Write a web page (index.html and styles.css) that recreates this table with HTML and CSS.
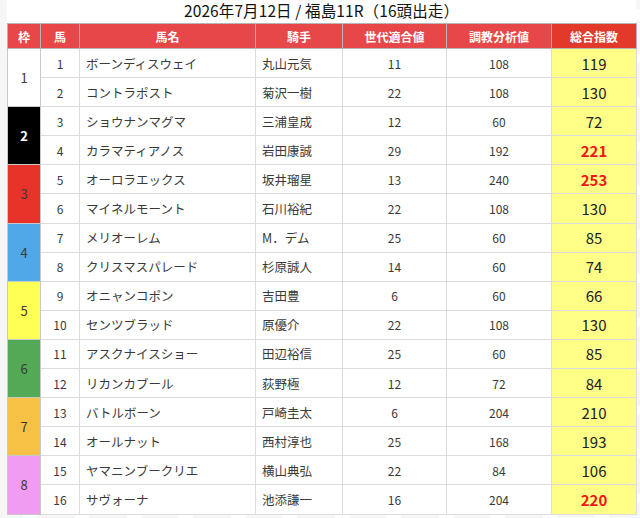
FILE: index.html
```html
<!DOCTYPE html>
<html lang="ja">
<head>
<meta charset="utf-8">
<link rel="stylesheet" href="styles.css">
</head>
<body>
<div class="page">
  <h1 class="title">2026年7月12日 / 福島11R（16頭出走）</h1>
  <table class="race">
    <colgroup>
      <col class="c-waku"><col class="c-num"><col class="c-name"><col class="c-jockey"><col class="c-gen"><col class="c-train"><col class="c-total">
    </colgroup>
    <thead>
      <tr>
        <th>枠</th><th>馬</th><th>馬名</th><th>騎手</th><th>世代適合値</th><th>調教分析値</th><th class="th-total">総合指数</th>
      </tr>
    </thead>
    <tbody>
      <tr><td class="waku w1" rowspan="2">1</td><td class="num">1</td><td class="name">ボーンディスウェイ</td><td class="jockey">丸山元気</td><td class="val">11</td><td class="val">108</td><td class="total">119</td></tr>
      <tr><td class="num">2</td><td class="name">コントラポスト</td><td class="jockey">菊沢一樹</td><td class="val">22</td><td class="val">108</td><td class="total">130</td></tr>
      <tr><td class="waku w2" rowspan="2">2</td><td class="num">3</td><td class="name">ショウナンマグマ</td><td class="jockey">三浦皇成</td><td class="val">12</td><td class="val">60</td><td class="total">72</td></tr>
      <tr><td class="num">4</td><td class="name">カラマティアノス</td><td class="jockey">岩田康誠</td><td class="val">29</td><td class="val">192</td><td class="total hot">221</td></tr>
      <tr><td class="waku w3" rowspan="2">3</td><td class="num">5</td><td class="name">オーロラエックス</td><td class="jockey">坂井瑠星</td><td class="val">13</td><td class="val">240</td><td class="total hot">253</td></tr>
      <tr><td class="num">6</td><td class="name">マイネルモーント</td><td class="jockey">石川裕紀</td><td class="val">22</td><td class="val">108</td><td class="total">130</td></tr>
      <tr><td class="waku w4" rowspan="2">4</td><td class="num">7</td><td class="name">メリオーレム</td><td class="jockey">M．デム</td><td class="val">25</td><td class="val">60</td><td class="total">85</td></tr>
      <tr><td class="num">8</td><td class="name">クリスマスパレード</td><td class="jockey">杉原誠人</td><td class="val">14</td><td class="val">60</td><td class="total">74</td></tr>
      <tr><td class="waku w5" rowspan="2">5</td><td class="num">9</td><td class="name">オニャンコポン</td><td class="jockey">吉田豊</td><td class="val">6</td><td class="val">60</td><td class="total">66</td></tr>
      <tr><td class="num">10</td><td class="name">センツブラッド</td><td class="jockey">原優介</td><td class="val">22</td><td class="val">108</td><td class="total">130</td></tr>
      <tr><td class="waku w6" rowspan="2">6</td><td class="num">11</td><td class="name">アスクナイスショー</td><td class="jockey">田辺裕信</td><td class="val">25</td><td class="val">60</td><td class="total">85</td></tr>
      <tr><td class="num">12</td><td class="name">リカンカブール</td><td class="jockey">荻野極</td><td class="val">12</td><td class="val">72</td><td class="total">84</td></tr>
      <tr><td class="waku w7" rowspan="2">7</td><td class="num">13</td><td class="name">バトルボーン</td><td class="jockey">戸崎圭太</td><td class="val">6</td><td class="val">204</td><td class="total">210</td></tr>
      <tr><td class="num">14</td><td class="name">オールナット</td><td class="jockey">西村淳也</td><td class="val">25</td><td class="val">168</td><td class="total">193</td></tr>
      <tr><td class="waku w8" rowspan="2">8</td><td class="num">15</td><td class="name">ヤマニンブークリエ</td><td class="jockey">横山典弘</td><td class="val">22</td><td class="val">84</td><td class="total">106</td></tr>
      <tr><td class="num">16</td><td class="name">サヴォーナ</td><td class="jockey">池添謙一</td><td class="val">16</td><td class="val">204</td><td class="total hot">220</td></tr>
    </tbody>
  </table>
</div>
</body>
</html>
```

FILE: styles.css
```css
html, body {
  margin: 0;
  padding: 0;
}
body {
  font-family: "Noto Sans CJK JP", "Noto Sans", sans-serif;
  color: #333;
  background-color: #f6f6f6;
  background-image:
    radial-gradient(circle at 12px 14px, #ffffff 5px, transparent 6px),
    radial-gradient(circle at 30px 34px, #ffffff 7px, transparent 8px),
    radial-gradient(circle at 44px 8px, #ffffff 4px, transparent 5px);
  background-size: 52px 44px;
}
.page {
  padding: 0 4px 0 7px;
  width: 629px;
}
.title {
  margin: 0;
  height: 23px;
  font-size: 15.5px;
  font-weight: normal;
  line-height: 21px;
  text-align: center;
  color: #111;
  letter-spacing: 0.1px;
  background: #fff;
}
.race {
  border-collapse: collapse;
  width: 629px;
  table-layout: fixed;
  background: #fff;
}
.c-waku { width: 33px; }
.c-num { width: 39px; }
.c-name { width: 176px; }
.c-jockey { width: 87px; }
.c-gen { width: 104px; }
.c-train { width: 105px; }
.c-total { width: 85px; }

.race th {
  height: 24px;
  padding: 0;
  background: #e8474a;
  color: #fff;
  font-size: 12px;
  font-weight: bold;
  border: 1px solid #b5b5b5;
  text-align: center;
}
.race th.th-total {
  background: #e3392b;
}
.race td {
  height: 28.1px;
  padding: 0;
  border: 1px solid #dcdcdc;
  font-size: 12px;
  color: #3a3a3a;
  text-align: center;
}
.race td.name,
.race td.jockey {
  text-align: left;
  padding-left: 6px;
  font-size: 12.5px;
}
.race td.total {
  background: #ffff88;
  font-size: 15px;
  color: #222;
}
.race td.total.hot {
  color: #f21616;
  font-weight: bold;
}
.race td.waku {
  font-size: 13px;
  border-color: #c8c8c8;
}
.w1 { background: #fff; }
.w2 { background: #000; color: #fff !important; font-weight: bold; }
.w3 { background: #e8332a; }
.w4 { background: #4fa8e8; }
.w5 { background: #ffff55; }
.w6 { background: #53a955; }
.w7 { background: #f6c144; }
.w8 { background: #f09cf2; }
```
